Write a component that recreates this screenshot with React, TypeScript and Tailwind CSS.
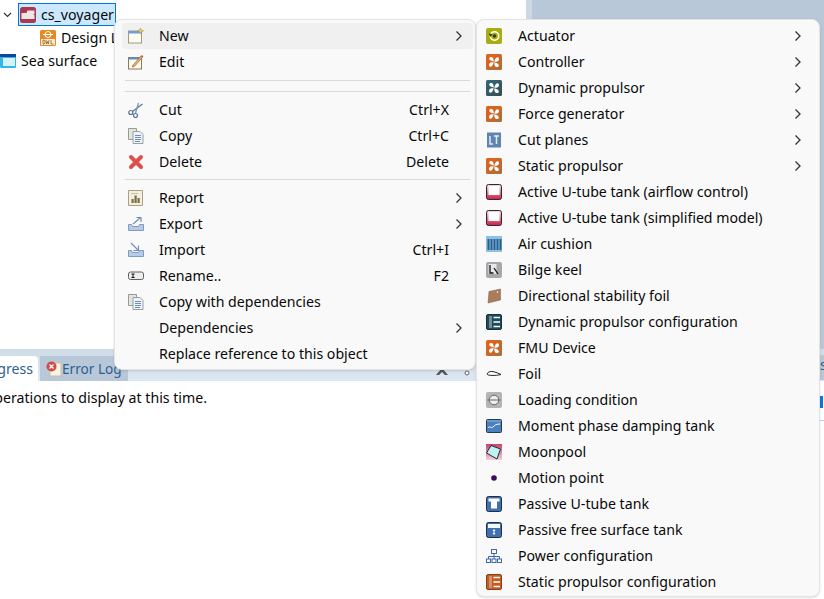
import type { ReactNode } from "react";

function Fan({ from, to }: { from: string; to: string }) {
  const id = `fan-${from.slice(1)}`;
  const blade = "M7.700 7.700C6 7 3.300 6.500 3.200 4.600 3.100 3.200 5 2.600 6.200 3.300 7.500 4 7.800 6 7.700 7.700z";
  return (
    <svg width="16" height="16" viewBox="0 0 16 16">
      <defs>
        <linearGradient id={id} x1="0" y1="0" x2="1" y2="1">
          <stop offset="0" stopColor={from} />
          <stop offset="1" stopColor={to} />
        </linearGradient>
      </defs>
      <rect x="0" y="0" width="16" height="16" rx="1.500" fill={`url(#${id})`} />
      <path d={blade} fill="#fff" />
      <path d={blade} fill="#fff" transform="rotate(90 8 8)" />
      <path d={blade} fill="#fff" transform="rotate(180 8 8)" />
      <path d={blade} fill="#fff" transform="rotate(270 8 8)" />
    </svg>
  );
}

const OrangeFan = () => <Fan from="#ee5f14" to="#a8703c" />;

function NewIcon() {
  return (
    <svg width="16" height="16" viewBox="0 0 16 16">
      <rect x="0.500" y="3" width="13" height="12" fill="#fdfbf0" stroke="#a09a78" />
      <rect x="0.500" y="3" width="13" height="2.500" fill="#6d9fd8" />
      <path d="M12.500 0l1 2 2.200.8-2.200.8-1 2.200-1-2.200-2.200-.8 2.200-.8z" fill="#ecd070" stroke="#a88a30" strokeWidth="0.500" />
    </svg>
  );
}

function EditIcon() {
  return (
    <svg width="16" height="16" viewBox="0 0 16 16">
      <rect x="0.500" y="3.500" width="13" height="11.500" fill="#fdfbf0" stroke="#8a7a50" />
      <rect x="0.500" y="3.500" width="13" height="2" fill="#5f8fca" />
      <path d="M5 11l8-9 1.500 1.300-8 9-2.200.8z" fill="#e8b860" stroke="#8a5030" strokeWidth="0.600" />
      <path d="M13 2l.8-1 1.500 1.300-.8 1z" fill="#d04040" />
    </svg>
  );
}

function CutIcon() {
  return (
    <svg width="16" height="16" viewBox="0 0 16 16" fill="none">
      <path d="M14.500 2L4.500 9.500" stroke="#5d7a9c" strokeWidth="1.300" />
      <path d="M10.500 1l-3 10" stroke="#8298b0" strokeWidth="1.300" />
      <circle cx="2.800" cy="10.500" r="2" stroke="#4f6f95" strokeWidth="1.200" />
      <circle cx="7.500" cy="13.500" r="2" stroke="#4f6f95" strokeWidth="1.200" />
    </svg>
  );
}

function CopyIcon() {
  return (
    <svg width="16" height="16" viewBox="0 0 16 16">
      <path d="M.5.500h8v11h-8z" fill="#dce4ec" stroke="#a09a80" />
      <path d="M5 3.500h7l3 3v9H5z" fill="#eef3f8" stroke="#9aa0a0" />
      <path d="M7 7.500h6M7 9.500h6M7 11.500h6M7 13.500h5" stroke="#6d8fb5" />
    </svg>
  );
}

function DeleteIcon() {
  return (
    <svg width="16" height="16" viewBox="0 0 16 16">
      <path d="M3 3l10 10M13 3L3 13" stroke="#dc504e" strokeWidth="4" strokeLinecap="round" />
    </svg>
  );
}

function ReportIcon() {
  return (
    <svg width="16" height="16" viewBox="0 0 16 16">
      <path d="M.5.500h14v15H.500z" fill="#f3efe0" stroke="#a8a080" />
      <path d="M3 3.500h7" stroke="#c8c0a0" />
      <path d="M3.500 13V9h2.200v4zM6.500 13V5.500h2.200V13zM9.500 13V8h2.200v5z" fill="#7a6f48" />
    </svg>
  );
}

function ExportIcon() {
  return (
    <svg width="16" height="16" viewBox="0 0 16 16" fill="none">
      <path d="M.5 8.500h3l1 2h6l1-2h4v6H.500z" fill="#b9cbe4" stroke="#7d9cc4" />
      <path d="M5 8l7-6M8.500 1.500H13V6" stroke="#6c8db8" strokeWidth="1.100" />
    </svg>
  );
}

function ImportIcon() {
  return (
    <svg width="16" height="16" viewBox="0 0 16 16" fill="none">
      <path d="M.5 8.500h3l1 2h6l1-2h4v6H.500z" fill="#b9cbe4" stroke="#7d9cc4" />
      <path d="M3 1l7 7M10.500 3.500V8.500H5.500" stroke="#6c8db8" strokeWidth="1.100" />
    </svg>
  );
}

function RenameIcon() {
  return (
    <svg width="16" height="16" viewBox="0 0 16 16" fill="none">
      <rect x="0.500" y="4" width="15" height="7.500" rx="2" fill="#eee" stroke="#5f5f5f" />
      <path d="M3.500 6h3M3.500 9.500h3M5 6v3.500" stroke="#111" />
    </svg>
  );
}

function ActuatorIcon() {
  return (
    <svg width="16" height="16" viewBox="0 0 16 16" fill="none">
      <rect x="0" y="0" width="16" height="16" rx="2" fill="#a8ae12" />
      <circle cx="8.500" cy="8" r="4.200" stroke="#fff" strokeWidth="1.500" />
      <circle cx="8.500" cy="8" r="1.800" fill="#33400c" />
      <path d="M2.500 5.500l4 .5-2 3z" fill="#33400c" />
    </svg>
  );
}

function CutPlanesIcon() {
  return (
    <svg width="16" height="16" viewBox="0 0 16 16">
      <rect x="1" y="0.500" width="14" height="15" fill="#5f84b0" />
      <path d="M4 4v8h3M8 4h5M10.500 4v8" stroke="#e4ecf4" strokeWidth="1.500" fill="none" />
    </svg>
  );
}

function TankIcon({ top, bottom }: { top: string; bottom: string }) {
  const id = `tank-${bottom.slice(1)}`;
  return (
    <svg width="16" height="16" viewBox="0 0 16 16">
      <defs>
        <linearGradient id={id} x1="0" y1="0" x2="0" y2="1">
          <stop offset="0" stopColor={top} />
          <stop offset="1" stopColor={bottom} />
        </linearGradient>
      </defs>
      <rect x="0.500" y="0.500" width="15" height="15" rx="2" fill={`url(#${id})`} stroke="#2b2b33" />
      <rect x="2.500" y="2" width="11" height="9" fill="#fff" />
    </svg>
  );
}

function AirCushionIcon() {
  return (
    <svg width="16" height="16" viewBox="0 0 16 16">
      <rect x="0" y="0" width="16" height="16" fill="#8cc0e4" />
      <path d="M1.500 3h2v11h-2zM4.500 3h2v11h-2zM7.500 3h2v11h-2zM10.500 3h2v11h-2zM13.500 3h2v11h-2z" fill="#2a5f8a" />
    </svg>
  );
}

function BilgeIcon() {
  return (
    <svg width="16" height="16" viewBox="0 0 16 16" fill="none">
      <rect x="0" y="0" width="16" height="16" rx="2" fill="#a8a8ac" />
      <rect x="2.500" y="2" width="8" height="10" fill="#e8e8ea" />
      <path d="M4 3v8h3.500" stroke="#111" strokeWidth="1.300" />
      <path d="M8 6l4 6" stroke="#111" strokeWidth="1.300" />
    </svg>
  );
}

function DirectionalIcon() {
  return (
    <svg width="16" height="16" viewBox="0 0 16 16">
      <path d="M3 3.500L14.500 1v11L2 15z" fill="#a97c5c" stroke="#7a5a44" strokeWidth="0.500" />
      <circle cx="11.500" cy="4" r="0.800" fill="#fff" />
    </svg>
  );
}

function ConfigIcon({ bg, edge }: { bg: string; edge: string }) {
  return (
    <svg width="16" height="16" viewBox="0 0 16 16">
      <rect x="0.500" y="0.500" width="15" height="15" rx="1.500" fill={bg} stroke={edge} />
      <path d="M3 2.500h3v11H3z" fill="#cfcfcf" />
      <path d="M3 4h3M3 6h3M3 8h3M3 10h3M3 12h3" stroke={bg} />
      <path d="M7.500 3.500H14M7.500 8H14M7.500 12.500H14" stroke="#fff" strokeWidth="1.500" />
    </svg>
  );
}

function FoilIcon() {
  return (
    <svg width="16" height="16" viewBox="0 0 16 16" fill="none">
      <path d="M1 8c1-2.500 4-3 7-2.200 2.500.7 5 1.700 7 2.700-3 .8-6 1-9 .9C3.500 9.400 1.500 9 1 8z" fill="#fff" stroke="#222" />
    </svg>
  );
}

function LoadingIcon() {
  return (
    <svg width="16" height="16" viewBox="0 0 16 16" fill="none">
      <rect x="0" y="0" width="16" height="16" rx="2" fill="#b4b4b4" />
      <circle cx="8" cy="8" r="4.800" fill="#ececec" stroke="#666" />
      <path d="M1.500 8h13" stroke="#666" />
    </svg>
  );
}

function DampingIcon() {
  return (
    <svg width="16" height="16" viewBox="0 0 16 16" fill="none">
      <rect x="0.500" y="1.500" width="15" height="13" rx="1" fill="#4a7fc0" stroke="#2a3850" />
      <path d="M2 10c2-3 3 1 5-1s3-3 7-3" stroke="#fff" />
      <path d="M1 3h14" stroke="#8fb5e0" />
    </svg>
  );
}

function MoonpoolIcon() {
  return (
    <svg width="16" height="16" viewBox="0 0 16 16">
      <defs>
        <linearGradient id="moon" x1="0" y1="0" x2="0" y2="1">
          <stop offset="0" stopColor="#c84068" />
          <stop offset="1" stopColor="#f4d0d8" />
        </linearGradient>
      </defs>
      <rect width="16" height="16" fill="url(#moon)" />
      <path d="M5 1.500l9.500 3.500-3.500 10L.5 9z" fill="#bff0ec" stroke="#1d2a48" />
    </svg>
  );
}

function DotIcon() {
  return (
    <svg width="16" height="16" viewBox="0 0 16 16">
      <circle cx="8" cy="8" r="2.800" fill="#3f0a5f" />
    </svg>
  );
}

function PassiveUIcon() {
  return (
    <svg width="16" height="16" viewBox="0 0 16 16">
      <rect x="0.500" y="0.500" width="15" height="15" rx="2" fill="#3f70b0" stroke="#1f2c44" />
      <path d="M2.500 2.500h11v3h-2.500v7H5v-7H2.500z" fill="#fff" />
    </svg>
  );
}

function PassiveFreeIcon() {
  return (
    <svg width="16" height="16" viewBox="0 0 16 16">
      <rect x="0.500" y="0.500" width="15" height="15" rx="2" fill="#3f70b0" stroke="#1f2c44" />
      <rect x="2" y="2" width="12" height="4" fill="#f4f8fc" />
      <path d="M8 7l1.500 2h-1v2h1L8 13l-1.500-2h1V9h-1z" fill="#fff" />
    </svg>
  );
}

function PowerIcon() {
  return (
    <svg width="16" height="16" viewBox="0 0 16 16" fill="none" stroke="#3f68a8">
      <rect x="5.500" y="1.500" width="5" height="4" />
      <path d="M8 5.500V8M2.500 11V8.500h11V11M8 8v3" />
      <rect x="0.500" y="11" width="4" height="3.500" />
      <rect x="6" y="11" width="4" height="3.500" />
      <rect x="11.500" y="11" width="4" height="3.500" />
    </svg>
  );
}

function ProjectIcon() {
  return (
    <svg width="16" height="16" viewBox="0 0 16 16">
      <rect x="0" y="0" width="16" height="16" rx="2.500" fill="#a83a50" />
      <path d="M1.500 6h5l1-2.500h7V7L13 8h1.500v4H1.500z" fill="#f0e4e6" />
    </svg>
  );
}

function DwlIcon() {
  return (
    <svg width="16" height="16" viewBox="0 0 16 16" fill="none">
      <rect x="0" y="0" width="16" height="16" rx="1.500" fill="#e58a22" />
      <circle cx="8" cy="4.500" r="3" stroke="#fff" />
      <path d="M3 4.500h10" stroke="#fff" />
      <rect x="1" y="9" width="14" height="6" fill="#fbeedd" />
      <path d="M3 10v4h1.200l.8-1V11l-.8-1zM6 10l.6 4 .9-2.500.9 2.500.6-4M11 10v4h2.500" stroke="#a85a10" strokeWidth="0.800" />
    </svg>
  );
}

function SeaIcon() {
  return (
    <svg width="16" height="16" viewBox="0 0 16 16">
      <rect x="0" y="1" width="16" height="14" rx="1" fill="#30b8ec" />
      <rect x="0" y="1" width="16" height="3" fill="#0b4a90" />
      <rect x="3" y="5" width="12" height="8" fill="#d8f2fc" />
    </svg>
  );
}

function Chevron() {
  return (
    <svg width="8" height="12" viewBox="0 0 8 12" fill="none" className="shrink-0">
      <path d="M1.500 1.500L6 6l-4.500 4.500" stroke="#333" strokeWidth="1.300" />
    </svg>
  );
}

type Entry = {
  label: string;
  icon?: ReactNode;
  shortcut?: string;
  more?: boolean;
  active?: boolean;
};

const mainTop: Entry[] = [
  { label: "New", icon: <NewIcon />, more: true, active: true },
  { label: "Edit", icon: <EditIcon /> },
];
const mainClipboard: Entry[] = [
  { label: "Cut", icon: <CutIcon />, shortcut: "Ctrl+X" },
  { label: "Copy", icon: <CopyIcon />, shortcut: "Ctrl+C" },
  { label: "Delete", icon: <DeleteIcon />, shortcut: "Delete" },
];
const mainRest: Entry[] = [
  { label: "Report", icon: <ReportIcon />, more: true },
  { label: "Export", icon: <ExportIcon />, more: true },
  { label: "Import", icon: <ImportIcon />, shortcut: "Ctrl+I" },
  { label: "Rename..", icon: <RenameIcon />, shortcut: "F2" },
  { label: "Copy with dependencies", icon: <CopyIcon /> },
  { label: "Dependencies", more: true },
  { label: "Replace reference to this object" },
];

const subItems: Entry[] = [
  { label: "Actuator", icon: <ActuatorIcon />, more: true },
  { label: "Controller", icon: <OrangeFan />, more: true },
  { label: "Dynamic propulsor", icon: <Fan from="#2f6a78" to="#3a4a50" />, more: true },
  { label: "Force generator", icon: <OrangeFan />, more: true },
  { label: "Cut planes", icon: <CutPlanesIcon />, more: true },
  { label: "Static propulsor", icon: <OrangeFan />, more: true },
  { label: "Active U-tube tank (airflow control)", icon: <TankIcon top="#f4dfe4" bottom="#d01840" /> },
  { label: "Active U-tube tank (simplified model)", icon: <TankIcon top="#f4dfe4" bottom="#d01840" /> },
  { label: "Air cushion", icon: <AirCushionIcon /> },
  { label: "Bilge keel", icon: <BilgeIcon /> },
  { label: "Directional stability foil", icon: <DirectionalIcon /> },
  { label: "Dynamic propulsor configuration", icon: <ConfigIcon bg="#1f4a58" edge="#16323c" /> },
  { label: "FMU Device", icon: <OrangeFan /> },
  { label: "Foil", icon: <FoilIcon /> },
  { label: "Loading condition", icon: <LoadingIcon /> },
  { label: "Moment phase damping tank", icon: <DampingIcon /> },
  { label: "Moonpool", icon: <MoonpoolIcon /> },
  { label: "Motion point", icon: <DotIcon /> },
  { label: "Passive U-tube tank", icon: <PassiveUIcon /> },
  { label: "Passive free surface tank", icon: <PassiveFreeIcon /> },
  { label: "Power configuration", icon: <PowerIcon /> },
  { label: "Static propulsor configuration", icon: <ConfigIcon bg="#c85a20" edge="#8a4018" /> },
];

function MainRow({ item }: { item: Entry }) {
  return (
    <div className={`flex h-[26px] items-center rounded pl-1.5 pr-2.5 ${item.active ? "bg-[#f0f0f0]" : ""}`}>
      <span className="flex h-4 w-4 shrink-0 items-center justify-center">{item.icon}</span>
      <span className="ml-[15px] flex-1 whitespace-nowrap">{item.label}</span>
      {item.shortcut && <span className="mr-3.5 whitespace-nowrap">{item.shortcut}</span>}
      {item.more && <Chevron />}
    </div>
  );
}

function SubRow({ item }: { item: Entry }) {
  return (
    <div className="flex h-[26px] items-center rounded pl-1.5 pr-3.5">
      <span className="flex h-4 w-4 shrink-0 items-center justify-center">{item.icon}</span>
      <span className="ml-4 flex-1 whitespace-nowrap">{item.label}</span>
      {item.more && <Chevron />}
    </div>
  );
}

function Separator() {
  return <div className="ml-[3px] mr-[3px] h-px bg-[#d9d9d9]" />;
}

function TreeRow({ indent, icon, label, selected }: { indent: string; icon: ReactNode; label: string; selected?: boolean }) {
  return (
    <div className={`flex h-[23px] items-center ${indent}`}>
      {selected ? (
        <div className="flex h-[23px] w-[98px] items-center gap-[5px] border border-[#0078d7] bg-[#cce8ff] pl-[1px]">
          {icon}
          <span>{label}</span>
        </div>
      ) : (
        <div className="flex items-center gap-[5px]">
          {icon}
          <span className="whitespace-nowrap">{label}</span>
        </div>
      )}
    </div>
  );
}

export default function App() {
  return (
    <div className="relative flex h-[599px] w-[824px] flex-col overflow-hidden bg-white font-['Noto_Sans',sans-serif] text-[14.15px] leading-5 text-[#080808]">
      <div className="flex h-[349px]">
        <div className="w-[526px] pt-[3px]">
          <div className="flex items-center">
            <svg width="18" height="23" viewBox="0 0 18 23" fill="none" className="shrink-0">
              <path d="M4 10l3.500 3.500L11 10" stroke="#333" strokeWidth="1.200" />
            </svg>
            <TreeRow indent="" icon={<ProjectIcon />} label="cs_voyager" selected />
          </div>
          <TreeRow indent="pl-10" icon={<DwlIcon />} label="Design L" />
          <TreeRow indent="" icon={<SeaIcon />} label="Sea surface" />
        </div>
        <div className="w-1.5 bg-[#ccd8e4]" />
        <div className="flex-1 bg-[#b8c8d8]" />
      </div>

      <div className="flex h-[32px] items-end bg-gradient-to-b from-[#cfdbe8] to-[#dde8f2]">
        <div className="flex h-[25px] w-[38px] items-center justify-end whitespace-nowrap rounded-tr bg-white pr-[5px] text-[#2f5f8f]">
          Progress
        </div>
        <div className="ml-[2px] flex h-[25px] w-[88px] items-center bg-[#b8c8d8] pl-[6px] text-[13.6px] text-[#2f5f8f]">
          <svg width="16" height="16" viewBox="0 0 16 16" className="shrink-0">
            <rect x="4" y="2" width="11" height="13" fill="#f8f4e4" stroke="#c8c0a0" />
            <circle cx="5.500" cy="5.500" r="5" fill="#d04848" />
            <path d="M3.500 3.500l4 4M7.500 3.500l-4 4" stroke="#fff" strokeWidth="1.300" />
          </svg>
          <span className="whitespace-nowrap">Error Log</span>
        </div>
        <svg width="40" height="14" viewBox="0 0 40 14" className="mb-[4px] ml-[306px] shrink-0" fill="none">
          <path d="M2 12l6-7 6 7h-3l-3-3-3 3z" fill="#555" />
          <circle cx="33" cy="10" r="2" fill="#fff" stroke="#666" />
        </svg>
        <div className="flex-1" />
        <div className="mb-[1px] h-[25px] w-[4px] overflow-hidden bg-[#b8c8d8] text-[#2f5f8f]">s</div>
      </div>

      <div className="flex flex-1 justify-between bg-white pt-[7px]">
        <div className="flex w-[207px] justify-end whitespace-nowrap">
          There are no operations to display at this time.
        </div>
        <div className="flex w-[4px] flex-col">
          <div className="mt-[8px] h-[12px] w-[3px] bg-[#0a78e0]" />
          <div className="mt-[12px] h-px bg-[#b8d0e8]" />
        </div>
      </div>

      <div className="absolute left-[114px] top-[19px] h-[351px] w-[362px] rounded-lg border border-[#e4e4e4] bg-[#f9f9f9] pb-0 pl-[7px] pr-[2px] pt-[3px] shadow-sm">
        {mainTop.map((item) => (
          <MainRow key={item.label} item={item} />
        ))}
        <div className="mt-[5px]" />
        <Separator />
        <div className="mt-[10px]" />
        <Separator />
        <div className="mt-[5px]" />
        {mainClipboard.map((item) => (
          <MainRow key={item.label} item={item} />
        ))}
        <div className="mt-[4px]" />
        <Separator />
        <div className="mt-[5px]" />
        {mainRest.map((item) => (
          <MainRow key={item.label} item={item} />
        ))}
      </div>

      <div className="absolute left-[476px] top-[19px] h-[578px] w-[344px] rounded-lg border border-[#e4e4e4] bg-[#f9f9f9] px-[3px] pt-[3px] shadow-sm">
        {subItems.map((item) => (
          <SubRow key={item.label} item={item} />
        ))}
      </div>
    </div>
  );
}
